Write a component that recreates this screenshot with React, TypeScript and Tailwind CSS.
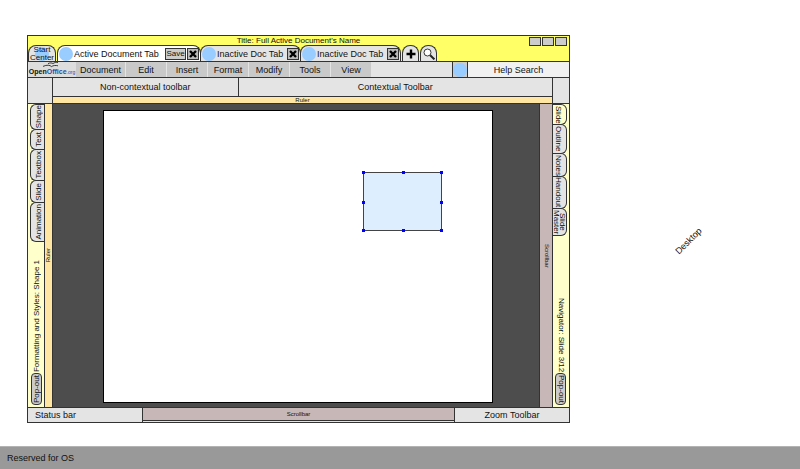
import { useState } from 'react';
import { clsx } from 'clsx';

interface DocTabProps {
  label: string;
  active?: boolean;
  onSelect: () => void;
}

interface SideTab {
  label: string;
  size: string;
}

const menus = [
  { label: 'Document', size: 'w-[49px]' },
  { label: 'Edit', size: 'w-10' },
  { label: 'Insert', size: 'w-10' },
  { label: 'Format', size: 'w-10' },
  { label: 'Modify', size: 'w-10' },
  { label: 'Tools', size: 'w-10' },
  { label: 'View', size: 'w-10' },
];

const styleTabs: SideTab[] = [
  { label: 'Shape', size: 'h-[26px]' },
  { label: 'Text', size: 'h-[21px]' },
  { label: 'Textbox', size: 'h-8' },
  { label: 'Slide', size: 'h-[23px]' },
  { label: 'Animation', size: 'h-10' },
];

const viewTabs: SideTab[] = [
  { label: 'Slide', size: 'h-[21px]' },
  { label: 'Outline', size: 'h-[30px]' },
  { label: 'Notes', size: 'h-6' },
  { label: 'Handout', size: 'h-[33px]' },
  { label: 'Slide Master', size: 'h-7' },
];

const handles = [
  '-left-0.5 -top-0.5',
  'left-1/2 -top-0.5 -ml-px',
  '-right-0.5 -top-0.5',
  '-left-0.5 top-1/2 -mt-px',
  '-right-0.5 top-1/2 -mt-px',
  '-left-0.5 -bottom-0.5',
  'left-1/2 -bottom-0.5 -ml-px',
  '-right-0.5 -bottom-0.5',
];

function CloseButton() {
  return (
    <button aria-label="Close" className="flex h-3 w-3 shrink-0 items-center justify-center border border-[#333] bg-[#bbb]">
      <svg viewBox="0 0 8 8" className="h-2 w-2" stroke="#000" strokeWidth="2.4">
        <path d="M1 1 7 7M7 1 1 7" />
      </svg>
    </button>
  );
}

function DocTab({ label, active, onSelect }: DocTabProps) {
  return (
    <div
      className={clsx(
        'flex h-full items-center rounded-t-lg border border-b-0 border-[#333] pl-px',
        active ? 'w-36 bg-white pr-px' : 'w-[101px] bg-[#e4e4e4] pr-px'
      )}
    >
      <button onClick={onSelect} className="flex flex-1 items-center gap-px whitespace-nowrap">
        <span className="h-3.5 w-3.5 shrink-0 rounded-full bg-[#99ccff]" />
        {label}
      </button>
      {active && (
        <button className="mr-px h-3 w-[21px] shrink-0 border border-[#333] bg-[#ccc] text-[8px] leading-[10px]">Save</button>
      )}
      <CloseButton />
    </div>
  );
}

function OfficeLogo() {
  return (
    <a href="#home" className="flex w-12 shrink-0 flex-col items-center bg-[#ddd]">
      <svg viewBox="0 0 20 6" className="h-1.5 w-5" fill="none" stroke="#111" strokeWidth="0.8">
        <path d="M6 1.600C8 .6 10 .8 11 1.600 12.500 .4 14 .2 16 .6" />
        <path d="M1 4.400C5 2.600 8 3 9.500 4.600 11 3.400 14 3.200 16 3.800" />
      </svg>
      <span className="whitespace-nowrap text-[7px] font-bold leading-[8px] text-[#111]">
        Open<span className="text-[#1d4fae]">Office</span>
        <span className="text-[5px] font-normal text-[#1d4fae]">.org</span>
      </span>
    </a>
  );
}

export default function App() {
  const [activeDoc, setActiveDoc] = useState(0);
  const docs = ['Active Document Tab', 'Inactive Doc Tab', 'Inactive Doc Tab'];

  return (
    <div className="flex min-h-screen flex-col bg-white font-['Liberation_Sans',Arial,sans-serif] text-[9px] leading-[12px] text-[#111]">
      <main className="grid flex-1 grid-cols-[543fr_230fr] pt-[35px] pb-[23px] pl-[27px]">
        <div className="flex flex-col border border-[#333] bg-[#e4e4e4]">
          {/* Title and document tabs */}
          <header className="border-b border-[#333] bg-[#ffff66]">
            <div className="relative flex h-[9px] justify-center">
              <h1 className="text-[8px] leading-[9px]">Title: Full Active Document's Name</h1>
              <div className="absolute top-px right-0.5 flex gap-px">
                {['Minimize', 'Maximize', 'Close window'].map((name) => (
                  <button key={name} aria-label={name} className="h-[9px] w-3 border border-[#333] bg-[#ccc]" />
                ))}
              </div>
            </div>
            <nav className="flex h-4 items-stretch">
              <button className="relative mr-px flex w-7 items-center justify-center rounded-t-lg border border-b-0 border-[#333] bg-[#e4e4e4]">
                <span className="absolute h-3.5 w-3.5 rounded-full bg-[#99ccff]" />
                <span className="relative text-[8px] leading-[8px]">Start Center</span>
              </button>
              {docs.map((doc, i) => (
                <div key={i} className="-mr-px">
                  <DocTab label={doc} active={i === activeDoc} onSelect={() => setActiveDoc(i)} />
                </div>
              ))}
              <button aria-label="New tab" className="ml-0.5 flex w-[17px] items-center justify-center rounded-t-lg border border-b-0 border-[#333] bg-[#e4e4e4]">
                <svg viewBox="0 0 10 10" className="h-2.5 w-2.5" stroke="#000" strokeWidth="2.4">
                  <path d="M5 .5V9.500M.5 5H9.500" />
                </svg>
              </button>
              <button aria-label="Search tabs" className="ml-px flex w-[17px] items-center justify-center rounded-t-lg border border-b-0 border-[#333] bg-[#e4e4e4]">
                <svg viewBox="0 0 12 12" className="h-3 w-3" fill="#fff" stroke="#222">
                  <circle cx="4.500" cy="4.500" r="3.500" strokeWidth="0.9" />
                  <path d="M7.200 7.200 11.400 11.400" strokeWidth="2" />
                </svg>
              </button>
            </nav>
          </header>

          {/* Menu bar */}
          <div className="flex h-4 border-b border-[#333]">
            <OfficeLogo />
            <nav className="flex flex-1 gap-px">
              {menus.map((menu) => (
                <button key={menu.label} className={clsx('bg-[#c9c9c9]', menu.size)}>
                  {menu.label}
                </button>
              ))}
            </nav>
            <div className="flex w-4 items-center justify-center border-x border-[#333] bg-[#ccc]">
              <span className="h-3.5 w-3.5 rounded-full bg-[#99ccff]" />
            </div>
            <input
              aria-label="Help Search"
              placeholder="Help Search"
              className="w-[101px] bg-[#f1f1f1] text-center outline-none placeholder:text-[#111]"
            />
          </div>

          {/* Toolbars and horizontal ruler */}
          <div className="flex h-[26px] border-b border-[#333]">
            <div className="w-[25px] border-r border-[#333]" />
            <div className="flex flex-1 flex-col">
              <div className="flex flex-1 border-b border-[#333]">
                <div className="flex flex-[185] items-center justify-center border-r border-[#333]">Non-contextual toolbar</div>
                <div className="flex flex-[314] items-center justify-center">Contextual Toolbar</div>
              </div>
              <div className="h-1.5 bg-[#ffe6a3] text-center text-[6px] leading-[7px]">Ruler</div>
            </div>
            <div className="w-[17px] border-l border-[#333]" />
          </div>

          {/* Work area */}
          <div className="flex flex-1">
            <aside className="flex w-[17px] flex-col items-end justify-between border-r border-[#333] bg-[#ffffcc] text-[8px]">
              <div className="flex flex-col">
                {styleTabs.map((tab) => (
                  <button
                    key={tab.label}
                    className={clsx('-mb-px flex w-3.5 items-center justify-end rounded-l-md border border-r-0 border-[#333] bg-[#e4e4e4]', tab.size)}
                  >
                    <span className="rotate-180 leading-[10px] [writing-mode:vertical-rl]">{tab.label}</span>
                  </button>
                ))}
              </div>
              <div className="mb-0.5 flex flex-col items-center gap-px pr-0.5">
                <span className="rotate-180 leading-[10px] whitespace-nowrap [writing-mode:vertical-rl]">Formatting and Styles: Shape 1</span>
                <button className="flex h-8 w-[11px] items-center justify-center rounded border border-[#333] bg-[#ccc]">
                  <span className="rotate-180 leading-[10px] whitespace-nowrap [writing-mode:vertical-rl]">Pop-out</span>
                </button>
              </div>
            </aside>
            <div className="flex w-2 items-center justify-center border-r border-[#333] bg-[#ffe6a3]">
              <span className="rotate-180 text-[6px] leading-[7px] [writing-mode:vertical-rl]">Ruler</span>
            </div>
            <div className="flex flex-1 bg-[#4d4d4d] pt-1.5 pr-[46px] pb-1 pl-[50px]">
              <div className="relative flex-1 border border-black bg-white">
                <div className="absolute top-[61px] left-[259px] h-[59px] w-[79px] border border-[#444] bg-[#ddeeff]">
                  {handles.map((pos) => (
                    <span key={pos} className={clsx('absolute h-[3px] w-[3px] bg-[#0000ff]', pos)} />
                  ))}
                </div>
              </div>
            </div>
            <div className="flex w-3.5 items-center justify-center border-x border-[#333] bg-[#c8b7b7]">
              <span className="text-[6px] leading-[7px] [writing-mode:vertical-rl]">Scrollbar</span>
            </div>
            <aside className="flex w-4 flex-col items-start justify-between bg-[#ffffcc] text-[8px]">
              <div className="flex flex-col">
                {viewTabs.map((tab, i) => (
                  <button
                    key={tab.label}
                    className={clsx(
                      '-mb-px flex w-3.5 items-center justify-start rounded-r-md border border-l-0 border-[#333]',
                      i === 0 ? 'bg-[#ffffcc]' : 'bg-[#e4e4e4]',
                      tab.size
                    )}
                  >
                    <span className={clsx('[writing-mode:vertical-rl]', tab.label.includes(' ') ? 'leading-[6px]' : 'leading-[10px]')}>{tab.label}</span>
                  </button>
                ))}
              </div>
              <div className="mb-0.5 flex flex-col items-center gap-px pl-0.5">
                <span className="leading-[10px] whitespace-nowrap [writing-mode:vertical-rl]">Navigator: Slide 3/12</span>
                <button className="flex h-8 w-[11px] items-center justify-center rounded border border-[#333] bg-[#ccc]">
                  <span className="leading-[10px] whitespace-nowrap [writing-mode:vertical-rl]">Pop-out</span>
                </button>
              </div>
            </aside>
          </div>

          {/* Status bar */}
          <footer className="grid h-[15px] grid-cols-[115px_1fr_115px] border-t border-[#333]">
            <div className="flex items-center border-r border-[#333] pl-[7px]">Status bar</div>
            <div className="mb-px border-b border-[#333] bg-[#c8b7b7] text-center text-[6px] leading-[12px]">Scrollbar</div>
            <div className="flex items-center justify-center border-l border-[#333]">Zoom Toolbar</div>
          </footer>
        </div>

        <div className="flex items-center justify-center pt-6 pl-2">
          <span className="-rotate-45">Desktop</span>
        </div>
      </main>
      <div className="flex h-[23px] items-center border-t border-[#b3b3b3] bg-[#999] pl-[7px]">Reserved for OS</div>
    </div>
  );
}
